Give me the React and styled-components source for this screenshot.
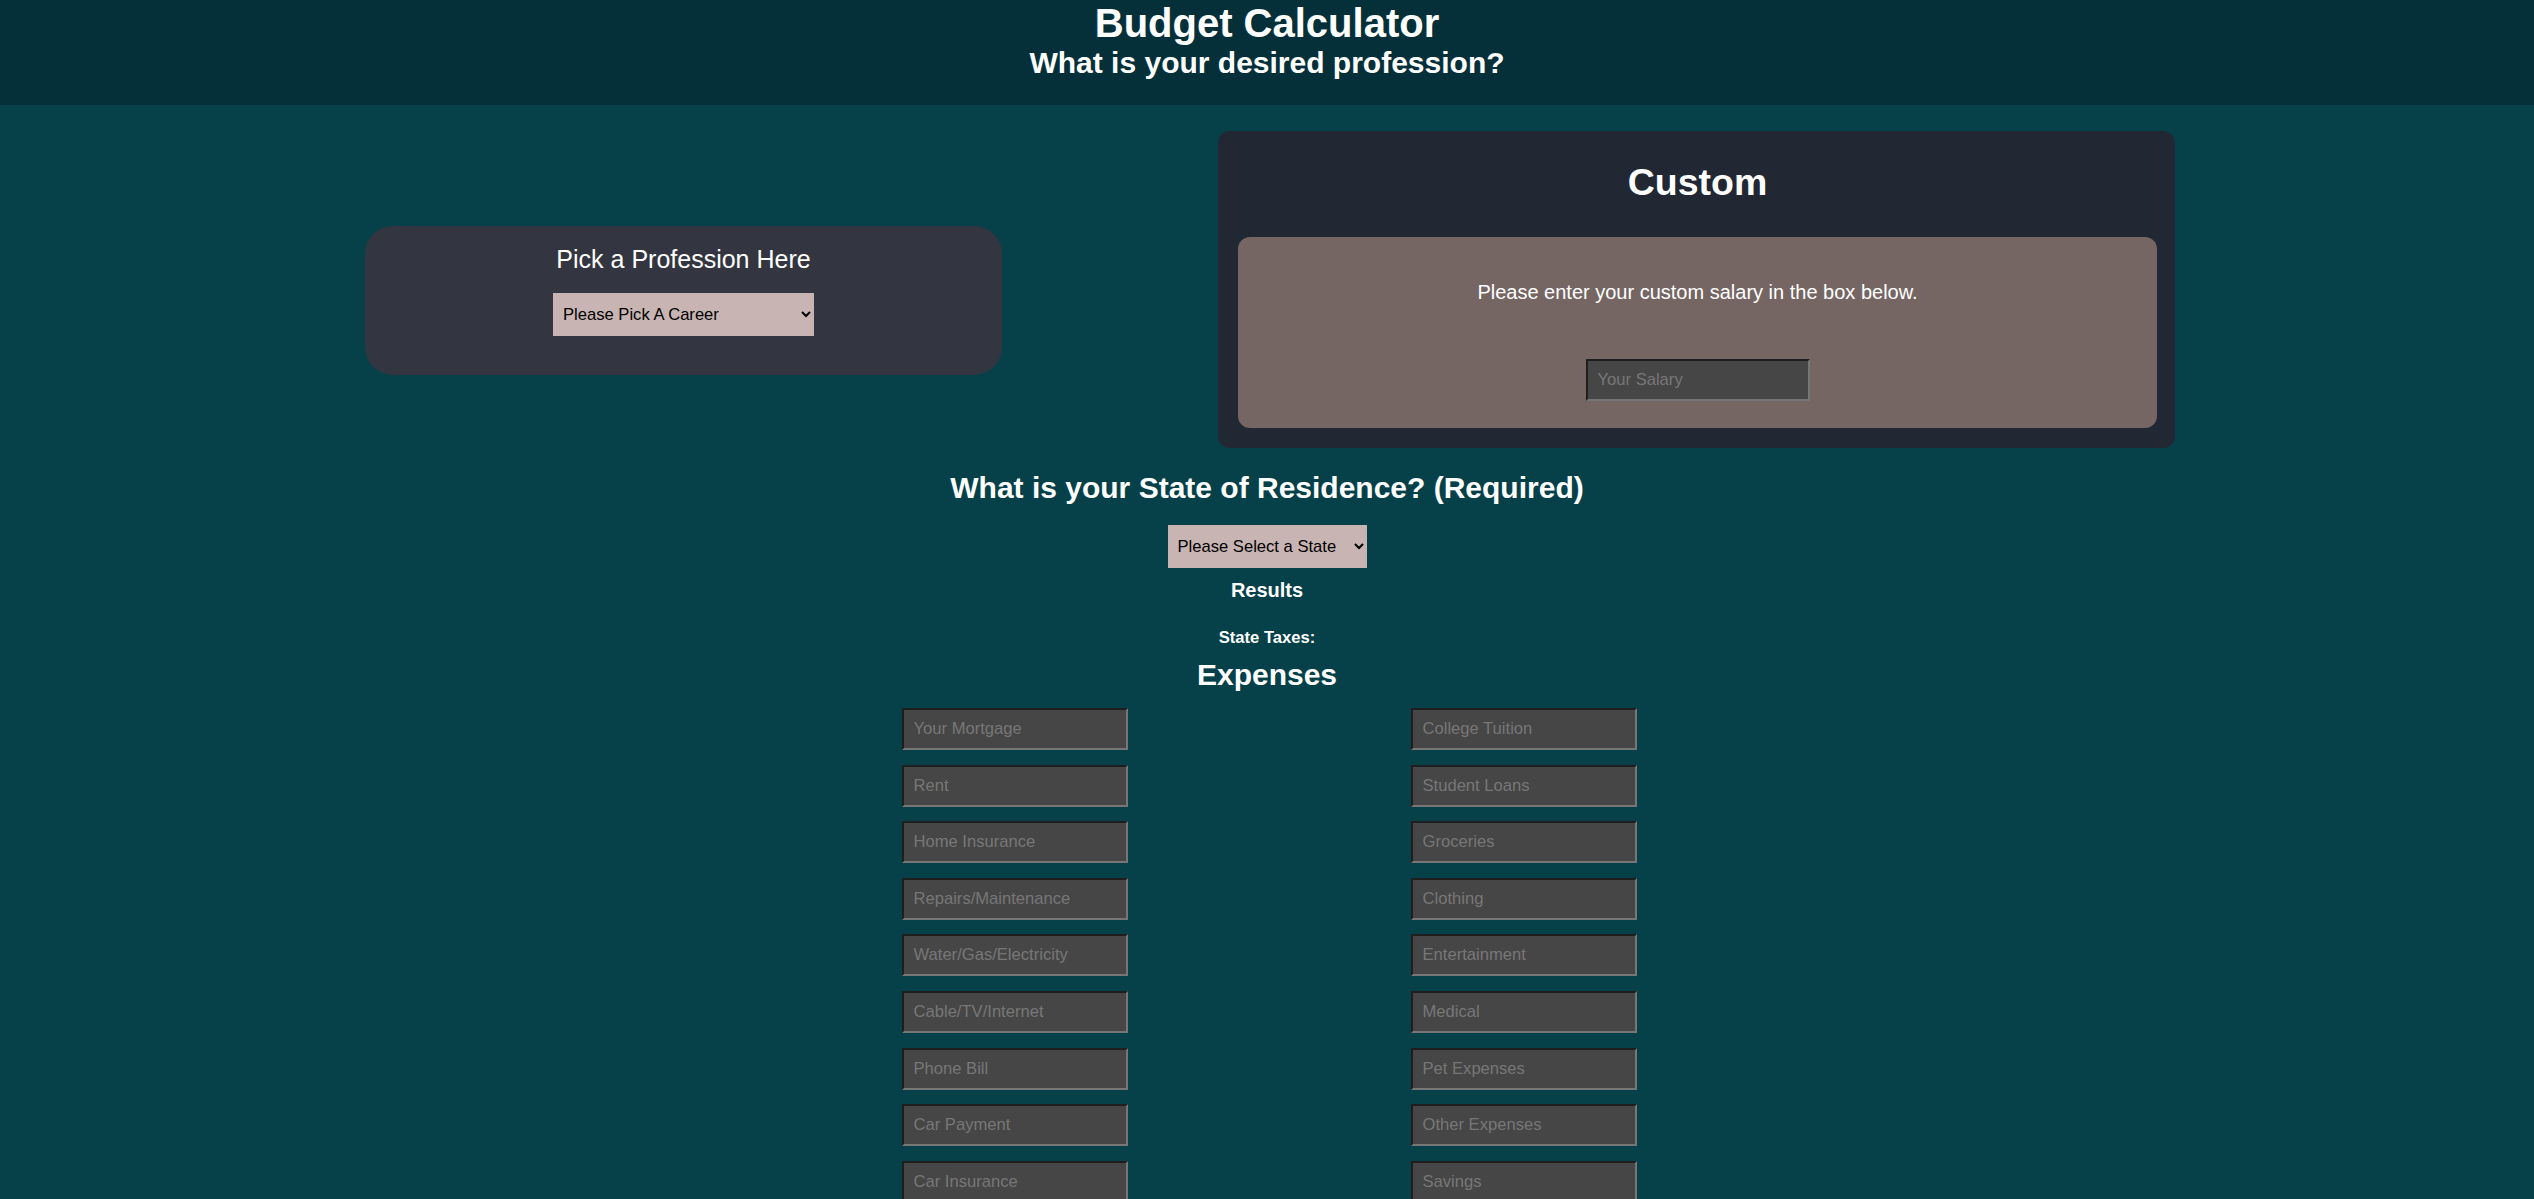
import React from 'react'
import styled, { createGlobalStyle } from 'styled-components'

const GlobalStyle = createGlobalStyle`
  body {
    margin: 0;
    background: #06414a;
    font-family: "Liberation Sans", Arial, sans-serif;
    font-size: 20px;
    color: #fff;
  }
`

const Header = styled.header`
  background: #05303a;
  text-align: center;
  padding: 0 0 25px;
`

const Title = styled.h1`
  margin: 0;
  font-size: 40px;
  line-height: 46px;
`

const Subtitle = styled.h2`
  margin: 0;
  font-size: 30px;
  line-height: 34px;
`

const TopRow = styled.section`
  display: flex;
  justify-content: space-between;
  align-items: center;
  padding: 26px 359px 0 365px;
`

const PickCard = styled.div`
  width: 637px;
  box-sizing: border-box;
  margin-top: 22px;
  padding: 19px 0 39px;
  background: #333640;
  border-radius: 28px;
  text-align: center;
`

const PickTitle = styled.div`
  font-size: 25px;
  line-height: 29px;
  margin-bottom: 19px;
`

const Select = styled.select`
  width: ${p => p.$w}px;
  height: 43px;
  box-sizing: border-box;
  border: none;
  background: #c8b4b3;
  color: #000;
  font-family: "Liberation Sans", Arial, sans-serif;
  font-size: 16.6px;
  padding: 0 4px 0 6px;
`

const CustomCard = styled.div`
  width: 957px;
  box-sizing: border-box;
  padding: 30px 18px 20px 20px;
  background: #212833;
  border-radius: 12px;
  text-align: center;
`

const CustomTitle = styled.h2`
  margin: 0 0 33px;
  font-size: 37.5px;
  line-height: 43px;
`

const SalaryBox = styled.div`
  background: #756664;
  border-radius: 12px;
  padding: 44px 0 27.5px;
`

const SalaryText = styled.p`
  margin: 0 0 54.5px;
  font-size: 20px;
  line-height: 23px;
`

const Field = styled.input`
  display: block;
  width: ${p => p.$w || 226}px;
  height: 42px;
  box-sizing: border-box;
  margin: ${p => (p.$center ? '0 auto' : '0')};
  padding: 0 10px;
  background: #464646;
  border: 2px solid;
  border-color: #1e1e1e #767676 #767676 #1e1e1e;
  color: #ddd;
  font-family: "Liberation Sans", Arial, sans-serif;
  font-size: 16.6px;
  &::placeholder {
    color: #777;
  }
`

const Lower = styled.section`
  display: flex;
  flex-direction: column;
  align-items: center;
  padding-top: 23px;
`

const StateHeading = styled.h2`
  margin: 0 0 20px;
  font-size: 30px;
  line-height: 34px;
`

const Results = styled.h4`
  margin: 11px 0 26px;
  font-size: 20px;
  line-height: 23px;
`

const Taxes = styled.h5`
  margin: 0 0 11px;
  font-size: 16.6px;
  line-height: 19px;
`

const ExpTitle = styled.h2`
  margin: 0 0 16px;
  font-size: 30px;
  line-height: 34px;
`

const ExpenseGrid = styled.div`
  display: grid;
  grid-template-columns: 226px 226px;
  column-gap: 283px;
  row-gap: 14.6px;
  padding-left: 4px;
`

const left = ['Your Mortgage', 'Rent', 'Home Insurance', 'Repairs/Maintenance', 'Water/Gas/Electricity', 'Cable/TV/Internet', 'Phone Bill', 'Car Payment', 'Car Insurance']
const right = ['College Tuition', 'Student Loans', 'Groceries', 'Clothing', 'Entertainment', 'Medical', 'Pet Expenses', 'Other Expenses', 'Savings']

export default function App() {
  return (
    <>
      <GlobalStyle />
      <Header>
        <Title>Budget Calculator</Title>
        <Subtitle>What is your desired profession?</Subtitle>
      </Header>

      <TopRow>
        <PickCard>
          <PickTitle>Pick a Profession Here</PickTitle>
          <Select $w={261}>
            <option>Please Pick A Career</option>
          </Select>
        </PickCard>

        <CustomCard>
          <CustomTitle>Custom</CustomTitle>
          <SalaryBox>
            <SalaryText>Please enter your custom salary in the box below.</SalaryText>
            <Field $w={224} $center placeholder="Your Salary" />
          </SalaryBox>
        </CustomCard>
      </TopRow>

      <Lower>
        <StateHeading>What is your State of Residence? (Required)</StateHeading>
        <Select $w={199}>
          <option>Please Select a State</option>
        </Select>
        <Results>Results</Results>
        <Taxes>State Taxes:</Taxes>
        <ExpTitle>Expenses</ExpTitle>
        <ExpenseGrid>
          {left.map((l, i) => (
            <React.Fragment key={l}>
              <Field placeholder={l} />
              <Field placeholder={right[i]} />
            </React.Fragment>
          ))}
        </ExpenseGrid>
      </Lower>
    </>
  )
}
